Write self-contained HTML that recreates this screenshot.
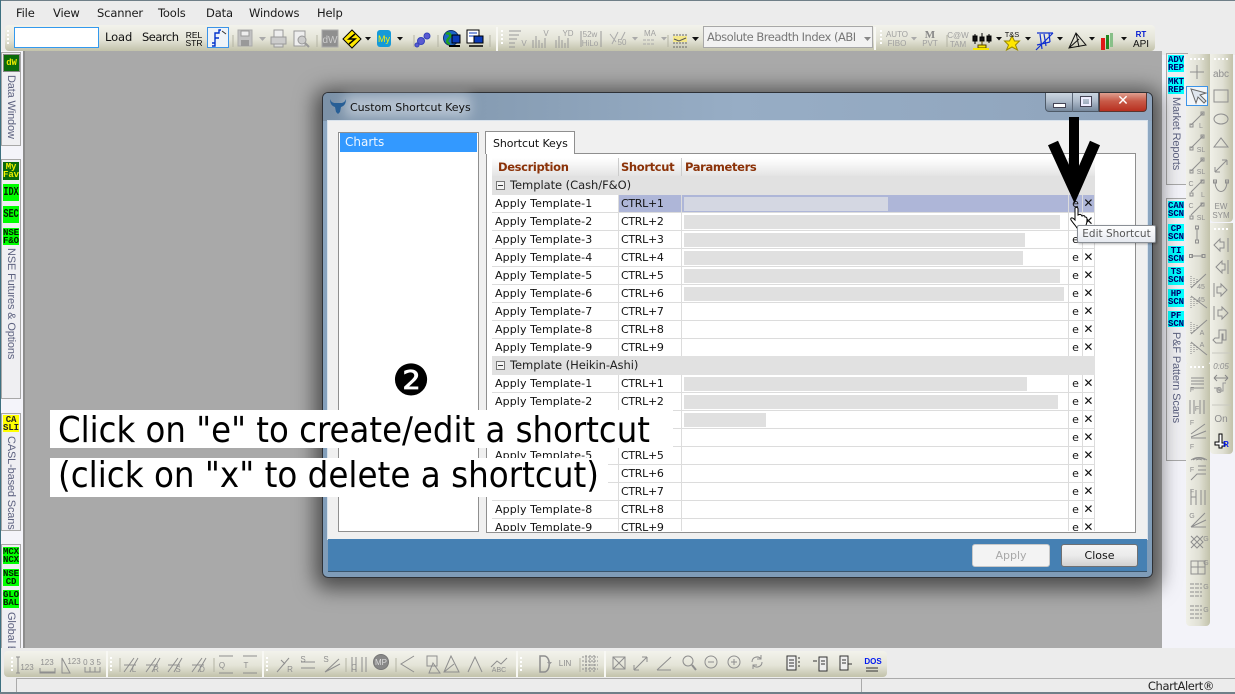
<!DOCTYPE html>
<html><head><meta charset="utf-8">
<style>
html,body{margin:0;padding:0}
body{width:1235px;height:694px;overflow:hidden;position:relative;background:#efeff2;font-family:"DejaVu Sans","Liberation Sans",sans-serif;color:#000}
.a{position:absolute}
.m{position:absolute;top:6px;font:11.5px/14px "DejaVu Sans",sans-serif;color:#1a1a1a;letter-spacing:-.15px}
.tb{position:absolute;background:linear-gradient(#f3f3ec,#e4e4d8 55%,#c2c2aa);border-radius:4px}
.vb{position:absolute;background:linear-gradient(90deg,#f0f0e8,#e0e0d4 55%,#c2c2aa);border-radius:0 0 4px 4px}
.pn{position:absolute;background:#efeff2;border:1px solid #a8a8a8;box-sizing:border-box}
.ic{position:absolute;font:bold 9px/8px "Liberation Mono",monospace;text-align:center;box-sizing:border-box;padding-top:1px;overflow:hidden;letter-spacing:-.1px}
.ic em{display:block;font-style:normal;font-size:12px;line-height:15px;width:24px;margin-left:-4px;transform:scaleX(.72)}
.g{background:#00ff00;color:#002200}.c{background:#00ffff;color:#000070}
.vt{position:absolute;writing-mode:vertical-rl;font:11px/14px "Liberation Sans",sans-serif;color:#5d6280;white-space:nowrap;overflow:hidden;letter-spacing:-.15px}
.r{position:absolute;left:492px;width:603px;height:18px;border-bottom:1px solid #dcdcdc;box-sizing:border-box;font:11px/17px "DejaVu Sans",sans-serif;color:#111;letter-spacing:.1px}
.r b{font-weight:normal;position:absolute;top:0;height:17px}
.d{left:3px}
.s{left:126px;width:63px;border-left:1px solid #dcdcdc;padding-left:2px;box-sizing:border-box;letter-spacing:-.3px}
.p{left:189px;width:387px;border-left:1px solid #dcdcdc;box-sizing:border-box}
.p i{position:absolute;left:2px;top:2px;height:14px;background:#e0e0e0}
.e{left:576px;width:14px;border-left:1px solid #dcdcdc;text-align:center;box-sizing:border-box}
.x{left:590px;width:13px;border-left:1px solid #dcdcdc;border-right:1px solid #dcdcdc;text-align:center;box-sizing:border-box;font-size:12px}
.gr{position:absolute;left:492px;width:603px;height:19px;background:#e1e1e1;font:11.5px/18px "DejaVu Sans",sans-serif;color:#222;letter-spacing:-.05px}
.gr span{position:absolute;left:18px;top:0}
.gr u{position:absolute;left:4px;top:5px;width:7px;height:7px;border:1px solid #777;background:#f4f4f4;text-decoration:none}
.gr u:after{content:"";position:absolute;left:1px;top:3px;width:5px;height:1px;background:#333}
.h{position:absolute;top:0;font:bold 11.5px/18px "DejaVu Sans",sans-serif;color:#8b3208;letter-spacing:-.35px}
svg text{font-family:"Liberation Sans",sans-serif}
</style></head>
<body>
<!-- frame lines -->
<div class="a" style="left:0;top:0;width:1235px;height:1px;background:#6f7f88"></div>
<div class="a" style="left:0;top:0;width:1px;height:694px;background:#3d7080"></div>
<div class="a" style="left:1px;top:1px;width:1234px;height:50px;background:#ececec"></div>
<span class="m" style="left:16px">File</span><span class="m" style="left:53px">View</span><span class="m" style="left:97px">Scanner</span><span class="m" style="left:158px">Tools</span><span class="m" style="left:206px">Data</span><span class="m" style="left:249px">Windows</span><span class="m" style="left:317px">Help</span>

<!-- gray workspace -->
<div class="a" style="left:25px;top:51px;width:1137px;height:597px;background:#a9a9a9"></div>
<div class="a" style="left:23px;top:51px;width:2px;height:597px;background:#8c8c8c"></div>

<!-- top toolbar -->
<div class="tb" style="left:5px;top:25px;width:1150px;height:26px"></div>
<div class="a" style="left:14px;top:27px;width:85px;height:21px;background:#fff;border:1px solid #3399ee;box-sizing:border-box"></div>
<div class="a" style="left:105px;top:30px;font:11.5px/14px 'DejaVu Sans',sans-serif;color:#111;letter-spacing:-.1px">Load</div>
<div class="a" style="left:142px;top:30px;font:11.5px/14px 'DejaVu Sans',sans-serif;color:#111;letter-spacing:-.5px">Search</div>
<div class="a" style="left:207px;top:27px;width:22px;height:21px;background:#eef3f8;border:1px solid #3b93e8;box-sizing:border-box"></div>
<div class="a" style="left:703px;top:26px;width:170px;height:22px;background:#f2f2f2;border:1px solid #a8a8a8;box-sizing:border-box;font:11.5px/20px 'DejaVu Sans',sans-serif;color:#777"><span style="display:block;width:150px;margin-left:3px;white-space:nowrap;overflow:hidden;letter-spacing:-.5px">Absolute Breadth Index (ABI</span></div>

<!-- left strip -->
<div class="a" style="left:1px;top:51px;width:22px;height:597px;background:#f4f4fa"></div>
<div class="pn" style="left:1px;top:52px;width:20px;height:94px"></div>
<div class="ic" style="left:4px;top:55px;width:15px;height:16px;background:#0a6b0a;border:1px solid #0a6b0a;color:#e8e800;font-size:9px;line-height:12px;outline:1px solid #888">dW</div>
<div class="vt" style="left:4px;top:75px;height:68px">Data Window</div>
<div class="pn" style="left:1px;top:159px;width:20px;height:240px"></div>
<div class="ic" style="left:3px;top:162px;width:16px;height:18px;background:#0a6b0a;color:#f0f000">My<br>Fav</div>
<div class="ic g" style="left:3px;top:184px;width:16px;height:17px"><em>IDX</em></div>
<div class="ic g" style="left:3px;top:206px;width:16px;height:17px"><em>SEC</em></div>
<div class="ic g" style="left:3px;top:228px;width:16px;height:17px">NSE<br>F&amp;O</div>
<div class="vt" style="left:4px;top:248px;height:120px">NSE Futures &amp; Options</div>
<div class="pn" style="left:1px;top:413px;width:20px;height:118px"></div>
<div class="ic" style="left:3px;top:415px;width:16px;height:17px;background:#ffff00;color:#222">CA<br>SLI</div>
<div class="vt" style="left:4px;top:436px;height:94px">CASL-based Scans</div>
<div class="pn" style="left:1px;top:544px;width:20px;height:106px"></div>
<div class="ic g" style="left:3px;top:547px;width:16px;height:17px">MCX<br>NCX</div>
<div class="ic g" style="left:3px;top:569px;width:16px;height:17px">NSE<br>CD</div>
<div class="ic g" style="left:3px;top:590px;width:16px;height:18px">GLO<br>BAL</div>
<div class="vt" style="left:4px;top:612px;height:36px">Global Equities</div>

<!-- right strip -->
<div class="a" style="left:1162px;top:51px;width:73px;height:597px;background:#f3f3f9"></div>
<div class="a" style="left:1162px;top:51px;width:73px;height:4px;background:#ececec"></div>
<div class="pn" style="left:1166px;top:53px;width:22px;height:132px"></div>
<div class="ic c" style="left:1168px;top:55px;width:16px;height:17px">ADV<br>REP</div>
<div class="ic c" style="left:1168px;top:77px;width:16px;height:17px">MKT<br>REP</div>
<div class="vt" style="left:1169px;top:97px;height:80px">Market Reports</div>
<div class="pn" style="left:1166px;top:198px;width:22px;height:263px"></div>
<div class="ic c" style="left:1168px;top:201px;width:16px;height:17px">CAN<br>SCN</div>
<div class="ic c" style="left:1168px;top:224px;width:16px;height:17px">CP<br>SCN</div>
<div class="ic c" style="left:1168px;top:246px;width:16px;height:17px">TI<br>SCN</div>
<div class="ic c" style="left:1168px;top:267px;width:16px;height:18px">TS<br>SCN</div>
<div class="ic c" style="left:1168px;top:289px;width:16px;height:18px">HP<br>SCN</div>
<div class="ic c" style="left:1168px;top:311px;width:16px;height:16px">PF<br>SCN</div>
<div class="vt" style="left:1169px;top:332px;height:96px">P&amp;F Pattern Scans</div>
<div class="vb" style="left:1186px;top:54px;width:24px;height:311px"></div>
<div class="vb" style="left:1186px;top:364px;width:24px;height:262px"></div>
<div class="vb" style="left:1210px;top:54px;width:23px;height:168px"></div>
<div class="vb" style="left:1210px;top:223px;width:23px;height:231px"></div>
<div class="a" style="left:1186px;top:86px;width:22px;height:20px;background:#f2f5f8;border:1px solid #3b93e8;box-sizing:border-box"></div>

<!-- bottom area -->
<div class="a" style="left:1px;top:648px;width:1234px;height:46px;background:#ececec"></div>
<div class="tb" style="left:4px;top:651px;width:883px;height:26px"></div>
<div class="a" style="left:16px;top:678px;width:845px;height:14px;border-left:1px solid #aaa;border-top:1px solid #aaa;box-sizing:border-box"></div>
<div class="a" style="left:861px;top:678px;width:357px;height:14px;border-left:1px solid #aaa;border-top:1px solid #aaa;box-sizing:border-box;font:11.5px/14px 'DejaVu Sans',sans-serif;color:#222;text-align:right;padding-right:4px;letter-spacing:-.4px">ChartAlert®</div>
<div class="a" style="left:1218px;top:678px;width:17px;height:14px;border-top:1px solid #aaa;box-sizing:border-box"></div>
<div class="a" style="left:0;top:692px;width:1235px;height:2px;background:#6f7f88"></div>

<!-- toolbar icons -->
<svg class="a" style="left:0;top:0" width="1235" height="694" fill="none" stroke="#999" stroke-width="1">
<!-- grips -->
<g stroke="#fff" stroke-width="2" stroke-dasharray="2 2"><path d="M8 30V46M502 30V46M881 30V46M12 657V672M111 657V672M267 657V672M521 657V672M1190 59h16M1214 59h16M1214 229h16M1190 367h16"/></g>
<g stroke="#b4b4a4"><path d="M233 35V47M317 35V47M414 35V47M438 35V47M490 35V47M668 35V47M947 35V47M120 658V672M214 658V672M346 658V672M396 658V672M580 658V672"/></g>
<path d="M497 27V51M875 27V50M107 651V677M263 651V677M517 651V677M605 651V677" stroke="#f8f8f4" stroke-width="2"/>
<g fill="#000" stroke="none" font-size="8.500" text-anchor="middle">
<text x="194" y="38">REL</text><text x="194" y="46">STR</text>
</g>
<path d="M212 43h3V33h4v-3h2M215 38h4M215 43v3h-3" stroke="#0033cc" stroke-width="1.400"/><path d="M222 31l4 3" stroke="#333"/>
<!-- save / print -->
<rect x="238" y="30" width="14" height="16" fill="#c2c2c2" stroke="#aaa"/><rect x="241" y="31" width="8" height="5" fill="#eee"/><rect x="241" y="40" width="8" height="6" fill="#999" stroke="none"/>
<path d="M259 37h7l-3.500 4z" fill="#aaa" stroke="none"/>
<rect x="271" y="37" width="15" height="7" fill="#ccc"/><rect x="274" y="30" width="9" height="7" fill="#eee"/><rect x="274" y="44" width="9" height="3" fill="#ddd"/>
<rect x="294" y="31" width="11" height="15" fill="#eee"/><circle cx="302" cy="40" r="4" fill="#ccc"/><path d="M305 43l4 4" stroke-width="2"/>
<rect x="322" y="30" width="16" height="17" fill="#8f8f8f" stroke="#aaa"/><text x="330" y="43" font-size="10" fill="#ccc" stroke="none" text-anchor="middle">dW</text>
<path d="M352 30l9 9-9 9-9-9z" fill="#ffe800" stroke="#000"/><path d="M355 34l-6 5h6l-6 5" stroke="#000" stroke-width="1.500"/>
<path d="M365 37h6l-3 3.500zM397 37h6l-3 3.500z" fill="#111" stroke="none"/>
<rect x="377" y="30" width="14" height="17" rx="3" fill="#159ad8" stroke="none"/><text x="384" y="42" font-size="9" fill="#fff000" stroke="none" text-anchor="middle">My</text>
<g fill="#5a5ad2" stroke="#3344bb"><circle cx="421" cy="41" r="3.500"/><circle cx="427" cy="36" r="3"/><circle cx="417" cy="45" r="2"/></g>
<circle cx="451" cy="38" r="7.500" fill="#1d67c8" stroke="#103070"/><path d="M446 34c3-2 6 1 3 4s-2 5 1 6" stroke="#20a020" stroke-width="2.500"/><rect x="452" y="35" width="8" height="8" fill="#0a3ab8" stroke="#000"/><path d="M449 46h11" stroke="#000" stroke-width="2"/>
<rect x="467" y="30" width="12" height="13" fill="#fff" stroke="#000"/><path d="M469 33h8M469 36h5" stroke="#0a3ab8"/><rect x="474" y="36" width="9" height="7" fill="#0a3ab8" stroke="#000"/><path d="M469 46h14" stroke="#000" stroke-width="1.500"/>
<!-- gray group -->
<g stroke="#999"><path d="M509 31h12M509 35h10M509 39h8M509 43h6M509 47h6"/><path d="M533 48V40M536 48V36M539 48V40M542 48V43M545 48V38M556 48V40M559 48V36M562 48V40M565 48V43M568 48V38"/><path d="M581 31V47M601 31V47"/></g>
<g fill="#a0a0a0" stroke="none" font-size="8" text-anchor="middle"><text x="524" y="46">V</text><text x="546" y="36">V</text><text x="568" y="36">YD</text><text x="590" y="37">52w</text><text x="590" y="46">HiLo</text><text x="622" y="45">50</text><text x="650" y="36">MA</text><text x="897" y="37">AUTO</text><text x="897" y="46">FIBO</text><text x="930" y="46">PVT</text><text x="958" y="38">C@W</text><text x="958" y="47">TAM</text></g>
<text x="930" y="38" font-size="11" font-weight="bold" fill="#888" stroke="none" text-anchor="middle" style="font-family:'Liberation Serif',serif">M</text>
<path d="M610 34l6 8M618 32l-6 12M625 32l-4 8" stroke="#aaa"/>
<path d="M632 37h6l-3 3.500zM661 37h6l-3 3.500zM911 37h6l-3 3.500z" fill="#aaa" stroke="none"/>
<path d="M643 40h12M643 44h12" stroke="#aaa" stroke-dasharray="3 1"/>
<rect x="673" y="36" width="14" height="6" fill="#f5e88a" stroke="none"/><path d="M673 35h14M673 43h14M673 47h14" stroke="#666" stroke-dasharray="2 1"/><path d="M674 39l5 2 7-3" stroke="#555"/><path d="M692 37h7l-3.500 4z" fill="#111" stroke="none"/>
<path d="M864 37h7l-3.500 4z" fill="#888" stroke="none"/>
<!-- chart icons -->
<g stroke="#000"><path d="M975 34V44M982 33V44M989 34V43"/><rect x="973" y="36" width="4" height="5" fill="#111"/><rect x="980" y="37" width="4" height="4" fill="#111"/><rect x="987" y="36" width="4" height="5" fill="#111"/></g>
<rect x="978" y="45" width="8" height="3" fill="#f5e500" stroke="#554400"/><path d="M982 41v4" stroke="#554400"/><rect x="973" y="48" width="16" height="2" fill="#f5e500" stroke="none"/>
<path d="M996 37h6l-3 3.500zM1025 37h6l-3 3.500zM1057 37h6l-3 3.500zM1089 37h6l-3 3.500zM1121 37h6l-3 3.500z" fill="#111" stroke="none"/>
<path d="M1012 36l2.500 5h5l-4 4 2 5-5.500-3-5.500 3 2-5-4-4h5z" fill="#ffe600" stroke="#998800"/>
<text x="1012" y="37" font-size="7.500" fill="#111" stroke="none" text-anchor="middle">T&amp;S</text>
<path d="M1037 33h16M1036 50l17-17M1040 34l2 15M1044 34l2 12M1049 33l1 9M1037 45l13-3" stroke="#1030d0" stroke-width="1.200"/>
<path d="M1076 33l-7 15 17-3z M1076 33l3 14M1069 48l10-9" stroke="#111"/>
<g stroke="none"><rect x="1101" y="38" width="4" height="12" fill="#e01818"/><rect x="1106" y="35" width="3" height="14" fill="#228822"/><rect x="1110" y="33" width="3" height="14" fill="#88c088"/></g>
<text x="1141" y="37" font-size="8" font-weight="bold" fill="#0018d0" stroke="none" text-anchor="middle">RT</text><text x="1141" y="47" font-size="10" fill="#111" stroke="none" text-anchor="middle">API</text>

<!-- vertical col 1 -->
<g stroke="#8e8e8e">
<path d="M1197 65V79M1190 72H1204"/>
<path d="M1191 89l5 14 2-6 6 6 2-2-6-6 6-2z" fill="#dfe6ee" stroke="#666"/>
<path d="M1191 125l12-12M1191 148l12-12M1191 171l12-12M1191 192l12-12M1191 215l12-12"/>
<rect x="1190" y="124" width="3" height="3"/><rect x="1201" y="112" width="3" height="3"/><rect x="1190" y="147" width="3" height="3"/><rect x="1201" y="135" width="3" height="3"/><rect x="1190" y="170" width="3" height="3"/><rect x="1201" y="158" width="3" height="3"/><rect x="1190" y="193" width="3" height="3"/><rect x="1201" y="180" width="3" height="3"/><rect x="1190" y="216" width="3" height="3"/><rect x="1201" y="203" width="3" height="3"/>
<path d="M1197 228V240"/><rect x="1195.500" y="226" width="3" height="3"/><rect x="1195.500" y="240" width="3" height="3"/>
<path d="M1191 256H1203"/><rect x="1189.500" y="254.500" width="3" height="3"/><rect x="1202" y="254.500" width="3" height="3"/>
<path d="M1191 288l15-14M1191 296l16 12M1191 334l16-14M1191 342l16 13"/>
<g stroke="#888" stroke-dasharray="1 1"><path d="M1191 287V275M1194 285V277M1197 282V279M1191 297V308M1194 299V307M1197 301V305M1191 333V321M1194 331V323M1197 328V325M1191 343V354M1194 345V353M1197 347V351"/></g>
<path d="M1191 388H1204M1191 378H1204M1191 381H1204M1191 384H1204M1190 400V414M1194 400V414M1200 400V414M1204 400V414M1191 434l14-10M1191 437l15-6M1191 438H1206M1191 460a14 14 0 0 1 16 0M1193 460a10 10 0 0 1 12 0M1196 460a6 6 0 0 1 6 0M1191 480l6-6H1206M1198 470H1206M1198 466H1206M1191 490V505M1196 490V505M1201 490V505M1205 490V505M1191 497H1196M1191 527L1205 513M1191 527L1206 520M1191 527H1206M1191 536l12 12M1203 536l-12 12M1191 542l6 6 6-6-6-6zM1191 561H1205V574H1191ZM1198 561V574M1191 567H1205"/>
<path d="M1190 584h12M1190 588h12M1190 592h12M1190 596h12M1190 606h12M1190 610h12M1190 614h12M1190 618h12" stroke-dasharray="4 1"/>
</g>
<g fill="#8e8e8e" stroke="none" font-size="7" text-anchor="middle">
<text x="1201" y="128">L</text><text x="1201" y="152">SL</text><text x="1201" y="174">SL</text><text x="1191" y="186">C</text><text x="1203" y="197">L</text><text x="1191" y="208">C</text><text x="1201" y="220">SL</text>
<text x="1201" y="289">45</text><text x="1201" y="302">45</text><text x="1202" y="335">A</text><text x="1202" y="347">A</text>
<text x="1192" y="392">F</text><text x="1197" y="411">F</text><text x="1192" y="425">F</text><text x="1192" y="449">F</text><text x="1192" y="472">F</text><text x="1192" y="494">F</text><text x="1192" y="518">G</text><text x="1206" y="541">G</text><text x="1206" y="565">G</text><text x="1206" y="589">G</text><text x="1206" y="612">G</text>
</g>
<!-- vertical col 2 -->
<g stroke="#8e8e8e">
<rect x="1214" y="90" width="14" height="12"/><ellipse cx="1221" cy="119" rx="7" ry="5"/><path d="M1214 147l7-9 7 9z"/>
<path d="M1215 172l12-12M1227 160h-5M1227 160v5M1215 172h5M1215 172v-5"/>
<path d="M1215 181c0 14 12 14 12 0"/><rect x="1213.500" y="180" width="3" height="3"/><rect x="1225.500" y="180" width="3" height="3"/>
<path d="M1214 245l6-6v3h4v6h-4v3zM1228 238V252M1216 267l6-6v3h3v6h-3v3zM1228 260V274M1227 290l-6-6v3h-4v6h4v3zM1214 283V297M1228 313l-6-6v3h-4v6h4v3zM1214 306V320M1215 338h4v-8h7v10h-3v-6h-1v9h-6l-3-3z"/>
<path d="M1212 353H1231M1212 405H1231" stroke="#c8c8c0"/>
<path d="M1214 378h14M1214 378l3-3M1214 378l3 3M1228 378l-3-3M1228 378l-3 3" stroke="#888"/>
<path d="M1226 383h-3v8h-4v-3h-5" stroke="#999"/>
</g>
<g fill="#8e8e8e" stroke="none" text-anchor="middle">
<text x="1221" y="77" font-size="10">abc</text><text x="1221" y="209" font-size="8">EW</text><text x="1221" y="218" font-size="8">SYM</text><text x="1221" y="369" font-size="8" font-style="italic">0:05</text><text x="1219" y="393" font-size="11">e</text><text x="1221" y="422" font-size="10">On</text>
</g>
<path d="M1219 434h3v9h3v3h-3v2h-3v-3h-4v-3h4z" fill="#fff" stroke="#000"/>
<text x="1226" y="447" font-size="8" font-weight="bold" fill="#0018f0" stroke="none" text-anchor="middle">R</text>
<!-- bottom icons -->
<g stroke="#8e8e8e">
<path d="M18 657V673M16 657h4M16 673h4M40 668v5h15v-5M40 672h15M62 673V658l8 15zM62 673h8M85 667v5h15v-5M90 667v5M95 667v5"/>
<path d="M124 672l10-14M130 672l8-14M146 672l10-14M152 672l8-14M168 672l10-14M174 672l8-14M192 672l10-14M198 672l8-14M124 665h12M146 665h12M168 665h12M192 665h12"/>
<path d="M219 656h14M219 673h14M243 656h14M243 673h14"/>
<path d="M277 672l12-14M281 660l4 4M301 662h14M301 668h14M325 672l14-13M325 672l15-8M352 657V672M356 657V672M362 657V672M366 657V672"/>
<circle cx="381" cy="662" r="7.500" fill="#888" stroke="#777"/>
<path d="M414 656l-13 8 13 8"/>
<rect x="427" y="656" width="10" height="10"/><path d="M429 673l4-10 7 10zM451 656l-7 16h15zM451 656l8 16M444 672l10-8M468 672l7-15 7 15M491 667l6-6 4 3 6-6"/>
<path d="M540 656h4c7 0 7 16 0 16h-4z" stroke-width="1.500"/><path d="M547 662h5l-2.500 3z" fill="#999" stroke="none"/>
<path d="M582 657h16M582 661h16M582 665h16M582 669h16M586 655v17M590 655v17M594 655v17" stroke-dasharray="2 1"/>
<rect x="613" y="657" width="12" height="12"/><path d="M613 657l12 12M625 657l-12 12M634 670l13-13M647 657h-5M647 657v5M634 670h5M634 670v-5M657 670l14-13M657 670h14"/>
<circle cx="688" cy="661" r="5"/><path d="M692 665l4 5" stroke-width="2"/>
<circle cx="711" cy="662" r="6"/><path d="M708 662h6"/><circle cx="734" cy="662" r="6"/><path d="M731 662h6M734 659v6"/>
<path d="M752 662a5 5 0 0 1 9-3M762 662a5 5 0 0 1-9 3M761 655v4h-4M753 669v-4h4"/>
<rect x="787" y="656" width="9" height="14" fill="#eee" stroke="#333"/><path d="M789 660h5M789 663h5M789 666h5" stroke="#333"/><path d="M798 658h2M798 662h2M798 666h2" stroke="#333"/>
<rect x="819" y="657" width="8" height="14" fill="#eee" stroke="#333"/><rect x="840" y="656" width="8" height="14" fill="#eee" stroke="#333"/><path d="M813 661h4M848 664h4M842 660h4M842 663h4M821 661h4M821 664h4" stroke="#333"/>
<path d="M866 668h12M866 671h12" stroke="#333"/>
</g>
<text x="873" y="664" font-size="8" font-weight="bold" fill="#0018f0" stroke="none" text-anchor="middle">DOS</text>
<g fill="#8e8e8e" stroke="none" font-size="8" text-anchor="middle">
<text x="27" y="670">123</text><text x="47" y="665">123</text><text x="74" y="664">123</text><text x="92" y="665">0 3 5</text>
<text x="134" y="672">L</text><text x="156" y="672">R</text><text x="178" y="672">S</text><text x="202" y="672">D</text><text x="222" y="668">Q</text><text x="246" y="668">T</text>
<text x="290" y="672">R</text><text x="303" y="662">S</text><text x="326" y="662">S</text><text x="354" y="670">C</text><text x="381" y="665" fill="#ddd">MP</text><text x="499" y="672" font-size="7">ABC</text><text x="565" y="666" font-size="8">LIN</text>
</g>
</svg>

<!-- dialog -->
<div class="a" style="left:322px;top:92px;width:831px;height:486px;border:1px solid #2e3136;box-sizing:border-box;border-radius:6px;background:linear-gradient(#8096b0,#8ea8c2 25px,#7f9cb8);box-shadow:0 4px 20px 7px rgba(0,0,0,.55)"></div>
<div class="a" style="left:323px;top:93px;width:829px;height:28px;background:linear-gradient(90deg,#7c92a8,#97adc5 50%,#8fa4bc);border-radius:5px 5px 0 0"></div>
<div class="a" style="left:345px;top:95px;width:125px;height:22px;background:rgba(235,240,245,.5);filter:blur(6px)"></div>
<svg class="a" style="left:329px;top:97px" width="18" height="18"><path d="M1 2c0 5 2 7 5 8l1 5 2 2 2-2 1-5c3-1 5-3 5-8-1 3-3 4-5 4H6C4 6 2 5 1 2z" fill="#285f96"/></svg>
<div class="a" style="left:350px;top:101px;font:11px/14px 'DejaVu Sans',sans-serif;color:#111;letter-spacing:-.05px">Custom Shortcut Keys</div>
<div class="a" style="left:1045px;top:93px;width:54px;height:19px;background:linear-gradient(#cad5e0,#aebbca 45%,#76889c);border:1px solid #4e5a68;box-sizing:border-box;border-top:0;border-radius:0 0 0 4px"></div>
<div class="a" style="left:1072px;top:93px;width:1px;height:19px;background:#5d6978"></div>
<div class="a" style="left:1099px;top:93px;width:48px;height:19px;background:linear-gradient(#dfa090,#c85a48 45%,#b83020);border:1px solid #5a3530;border-top:0;box-sizing:border-box;border-radius:0 0 4px 0;color:#fff;font:bold 14px/17px 'DejaVu Sans',sans-serif;text-align:center">✕</div>
<div class="a" style="left:1053px;top:103px;width:11px;height:3px;background:#fff;border:1px solid #445"></div>
<div class="a" style="left:1081px;top:97px;width:10px;height:9px;border:2px solid #eef;outline:1px solid #445;box-sizing:border-box"></div>

<div class="a" style="left:328px;top:121px;width:819px;height:418px;background:#f0f0f0;outline:1px solid #d8e2ec"></div>
<div class="a" style="left:328px;top:539px;width:819px;height:33px;background:#4580b3;border-bottom:1px solid #3a566e;box-sizing:border-box"></div>

<div class="a" style="left:338px;top:132px;width:141px;height:400px;background:#fff;border:1px solid #8f8f8f;box-sizing:border-box"></div>
<div class="a" style="left:340px;top:133px;width:137px;height:19px;background:#3399ff;color:#eef6ff;font:12px/19px 'DejaVu Sans',sans-serif;padding-left:5px;box-sizing:border-box">Charts</div>

<div class="a" style="left:486px;top:153px;width:650px;height:380px;background:#fff;border:1px solid #8f8f8f;box-sizing:border-box"></div>
<div class="a" style="left:485px;top:131px;width:90px;height:23px;background:#fff;border:1px solid #8f8f8f;border-bottom:0;box-sizing:border-box;font:11px/23px 'DejaVu Sans',sans-serif;padding-left:7px;letter-spacing:-.1px;color:#111">Shortcut Keys</div>

<div class="a" style="left:492px;top:158px;width:603px;height:19px;background:linear-gradient(#fff,#f4f4f4 40%,#e2e2e2)">
<span class="h" style="left:6px">Description</span><span class="h" style="left:129px">Shortcut</span><span class="h" style="left:193px">Parameters</span>
<i class="a" style="left:126px;top:0;width:1px;height:19px;background:#ccc"></i><i class="a" style="left:189px;top:0;width:1px;height:19px;background:#ccc"></i><i class="a" style="left:576px;top:0;width:1px;height:19px;background:#ccc"></i><i class="a" style="left:590px;top:0;width:1px;height:19px;background:#ccc"></i>
</div>

<div class="gr" style="top:176px"><u></u><span>Template (Cash/F&amp;O)</span></div>
<div class="r" style="top:195px;background:#fff"><b class="d">Apply Template-1</b><b class="s" style="background:#aeb6d8">CTRL+1</b><b class="p" style="background:#aeb6d8"><i style="width:204px;background:#d4d7e2"></i></b><b class="e" style="background:#aeb6d8">e</b><b class="x" style="background:#aeb6d8">✕</b></div>
<div class="r" style="top:213px"><b class="d">Apply Template-2</b><b class="s">CTRL+2</b><b class="p"><i style="width:376px"></i></b><b class="e">e</b><b class="x">✕</b></div>
<div class="r" style="top:231px"><b class="d">Apply Template-3</b><b class="s">CTRL+3</b><b class="p"><i style="width:341px"></i></b><b class="e">e</b><b class="x">✕</b></div>
<div class="r" style="top:249px"><b class="d">Apply Template-4</b><b class="s">CTRL+4</b><b class="p"><i style="width:339px"></i></b><b class="e">e</b><b class="x">✕</b></div>
<div class="r" style="top:267px"><b class="d">Apply Template-5</b><b class="s">CTRL+5</b><b class="p"><i style="width:376px"></i></b><b class="e">e</b><b class="x">✕</b></div>
<div class="r" style="top:285px"><b class="d">Apply Template-6</b><b class="s">CTRL+6</b><b class="p"><i style="width:380px"></i></b><b class="e">e</b><b class="x">✕</b></div>
<div class="r" style="top:303px"><b class="d">Apply Template-7</b><b class="s">CTRL+7</b><b class="p"></b><b class="e">e</b><b class="x">✕</b></div>
<div class="r" style="top:321px"><b class="d">Apply Template-8</b><b class="s">CTRL+8</b><b class="p"></b><b class="e">e</b><b class="x">✕</b></div>
<div class="r" style="top:339px"><b class="d">Apply Template-9</b><b class="s">CTRL+9</b><b class="p"></b><b class="e">e</b><b class="x">✕</b></div>
<div class="gr" style="top:356px"><u></u><span>Template (Heikin-Ashi)</span></div>
<div class="r" style="top:375px"><b class="d">Apply Template-1</b><b class="s">CTRL+1</b><b class="p"><i style="width:343px"></i></b><b class="e">e</b><b class="x">✕</b></div>
<div class="r" style="top:393px"><b class="d">Apply Template-2</b><b class="s">CTRL+2</b><b class="p"><i style="width:374px"></i></b><b class="e">e</b><b class="x">✕</b></div>
<div class="r" style="top:411px"><b class="d">Apply Template-3</b><b class="s">CTRL+3</b><b class="p"><i style="width:82px"></i></b><b class="e">e</b><b class="x">✕</b></div>
<div class="r" style="top:429px"><b class="d">Apply Template-4</b><b class="s">CTRL+4</b><b class="p"></b><b class="e">e</b><b class="x">✕</b></div>
<div class="r" style="top:447px"><b class="d">Apply Template-5</b><b class="s">CTRL+5</b><b class="p"></b><b class="e">e</b><b class="x">✕</b></div>
<div class="r" style="top:465px"><b class="d">Apply Template-6</b><b class="s">CTRL+6</b><b class="p"></b><b class="e">e</b><b class="x">✕</b></div>
<div class="r" style="top:483px"><b class="d">Apply Template-7</b><b class="s">CTRL+7</b><b class="p"></b><b class="e">e</b><b class="x">✕</b></div>
<div class="r" style="top:501px"><b class="d">Apply Template-8</b><b class="s">CTRL+8</b><b class="p"></b><b class="e">e</b><b class="x">✕</b></div>
<div class="r" style="top:519px;height:12px;overflow:hidden;border-bottom:0"><b class="d">Apply Template-9</b><b class="s">CTRL+9</b><b class="p"></b><b class="e">e</b><b class="x">✕</b></div>

<div class="a" style="left:972px;top:544px;width:78px;height:23px;background:#f3f3f3;border:1px solid #c8c8c8;border-radius:3px;box-sizing:border-box;font:11px/21px 'DejaVu Sans',sans-serif;color:#a8a8a8;text-align:center">Apply</div>
<div class="a" style="left:1061px;top:544px;width:77px;height:23px;background:linear-gradient(#f4f4f4,#ebebeb 50%,#d0d0d0);border:1px solid #6f7072;border-radius:3px;box-sizing:border-box;font:11px/21px 'DejaVu Sans',sans-serif;color:#111;text-align:center">Close</div>

<!-- annotation -->
<div class="a" style="left:50px;top:410px;width:623px;height:38px;background:#fff"></div>
<div class="a" style="left:50px;top:458px;width:558px;height:39px;background:#fff"></div>
<svg class="a" style="left:0;top:0" width="1235" height="694">
<text x="58" y="442" font-size="36" fill="#000" textLength="592" lengthAdjust="spacingAndGlyphs" style="font-family:'DejaVu Sans',sans-serif">Click on "e" to create/edit a shortcut</text>
<text x="58" y="487" font-size="36" fill="#000" textLength="541" lengthAdjust="spacingAndGlyphs" style="font-family:'DejaVu Sans',sans-serif">(click on "x" to delete a shortcut)</text>
<path d="M1074 117V190" stroke="#000" stroke-width="10" fill="none"/>
<path d="M1053 143L1074.500 190 1095 143" stroke="#000" stroke-width="11" fill="none"/>
<path d="M1071 188h7l-3.500 9z" fill="#000"/>
<path d="M1075 208c1-1 3-1 3 1v6c2-1 3-1 4 1 2-1 3 0 3 1 2 0 2 1 2 3 0 3-1 6-3 8h-7c-1-2-4-5-6-8-1-2 1-3 3-1l1 1z" fill="#fff" stroke="#000"/>
</svg>
<div class="a" style="left:386px;top:356px;width:50px;height:50px;font:43px/50px 'DejaVu Sans',sans-serif;color:#000;text-align:center">❷</div>
<div class="a" style="left:1077px;top:225px;width:79px;height:18px;background:linear-gradient(#fff,#e6e9f0);border:1px solid #8a8f96;border-radius:2px;box-sizing:border-box;font:10.500px/16px 'DejaVu Sans',sans-serif;color:#555;text-align:center;white-space:nowrap;box-shadow:1px 1px 2px rgba(0,0,0,.3)">Edit Shortcut</div>
</body></html>
